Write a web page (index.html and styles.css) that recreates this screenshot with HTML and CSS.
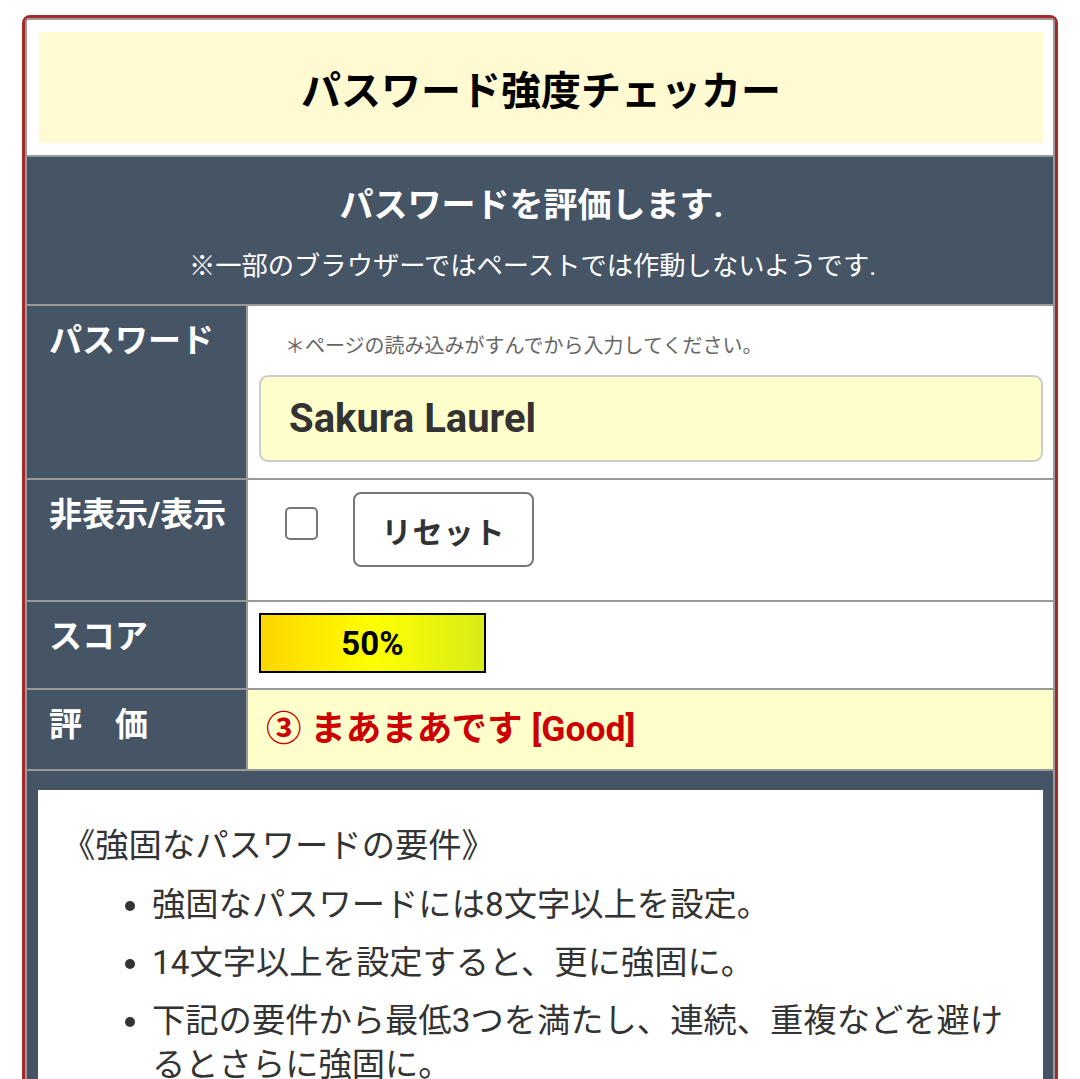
FILE: index.html
```html
<!DOCTYPE html>
<html lang="ja">
<head>
<meta charset="utf-8">
<title>パスワード強度チェッカー</title>
<link rel="stylesheet" href="styles.css">
</head>
<body>
<div class="frame">
  <div class="inner">
    <div class="title-wrap">
      <h1 class="title">パスワード強度チェッカー</h1>
    </div>
    <div class="head">
      <p class="head-main">パスワードを評価します.</p>
      <p class="head-sub">※一部のブラウザーではペーストでは作動しないようです.</p>
    </div>
    <div class="row row-pass">
      <div class="label">パスワード</div>
      <div class="value">
        <p class="note">＊ページの読み込みがすんでから入力してください。</p>
        <input class="pass-input" type="text" value="Sakura Laurel">
      </div>
    </div>
    <div class="row row-toggle">
      <div class="label">非表示/表示</div>
      <div class="value toggle-cell">
        <input class="check" type="checkbox">
        <button class="reset" type="button">リセット</button>
      </div>
    </div>
    <div class="row row-score">
      <div class="label">スコア</div>
      <div class="value score-cell">
        <div class="bar">50%</div>
      </div>
    </div>
    <div class="row row-eval">
      <div class="label">評　価</div>
      <div class="value eval-cell">③ まあまあです [Good]</div>
    </div>
    <div class="info-wrap">
      <div class="info">
        <p class="info-head">《強固なパスワードの要件》</p>
        <ul class="info-list">
          <li>強固なパスワードには8文字以上を設定。</li>
          <li>14文字以上を設定すると、更に強固に。</li>
          <li>下記の要件から最低3つを満たし、連続、重複などを避けるとさらに強固に。</li>
        </ul>
      </div>
    </div>
  </div>
</div>
</body>
</html>
```
FILE: styles.css
```css
* { box-sizing: border-box; }

html, body { background: #fff; }

body {
  margin: 15px 22px 0 22px;
  font-family: Roboto, "Noto Sans CJK JP", sans-serif;
  color: #333;
}

p { margin: 0; }

.frame {
  border: 3px solid #a52a2a;
  border-radius: 8px;
}

.inner {
  border: 2px solid #999;
  border-radius: 4px 4px 0 0;
  overflow: hidden;
}

.title-wrap {
  background: #fff;
  padding: 12px 10px 12px 12px;
}

.title {
  margin: 0;
  height: 111px;
  background: #fffad2;
  display: flex;
  align-items: center;
  justify-content: center;
  font-size: 40px;
  font-weight: bold;
  color: #000;
}

.head {
  border-top: 2px solid #999;
  background: #465566;
  color: #fff;
  text-align: center;
  padding: 24px 0 19px;
}

.head-main {
  font-size: 34px;
  font-weight: bold;
  line-height: 48px;
  padding-right: 17px;
}

.head-sub {
  margin-top: 18px;
  font-size: 26.3px;
  line-height: 38px;
  padding-right: 15px;
}

.row {
  display: grid;
  grid-template-columns: 221px 1fr;
  border-top: 2px solid #999;
}

.label {
  background: #465566;
  color: #fff;
  font-size: 33px;
  font-weight: bold;
  line-height: 48px;
  padding: 11px 0 0 22px;
  border-right: 2px solid #999;
  white-space: nowrap;
}

.value {
  background: #fff;
  padding: 11px 10px 16px 11px;
}

.note {
  margin-left: 26px;
  font-size: 20px;
  line-height: 58px;
  color: #666;
}

.pass-input {
  display: block;
  width: 100%;
  height: 87px;
  margin: 0;
  border: 2px solid #ccc;
  border-radius: 9px;
  background: #ffffcc;
  padding: 0 0 0 28px;
  font-family: Roboto, "Noto Sans CJK JP", sans-serif;
  font-size: 40px;
  font-weight: bold;
  color: #333;
  outline: none;
}

.toggle-cell {
  display: flex;
  align-items: flex-start;
  padding: 12px 10px 33px 11px;
}

.check {
  appearance: none;
  -webkit-appearance: none;
  width: 33px;
  height: 33px;
  margin: 15px 0 0 26px;
  border: 2px solid #777;
  border-radius: 5px;
  background: #fff;
}

.reset {
  margin: 0 0 0 35px;
  width: 181px;
  height: 75px;
  border: 2px solid #777;
  border-radius: 8px;
  background: #fff;
  font-family: Roboto, "Noto Sans CJK JP", sans-serif;
  font-size: 30px;
  font-weight: bold;
  letter-spacing: 1px;
  color: #333;
  padding: 0;
}

.score-cell {
  padding: 11px 10px 15px 11px;
}

.bar {
  width: 227px;
  height: 60px;
  border: 2px solid #000;
  background: linear-gradient(to right, #ffd600 0%, #ffff00 50%, #d8ec18 100%);
  display: flex;
  align-items: center;
  justify-content: center;
  font-size: 33px;
  font-weight: bold;
  color: #000;
}

.eval-cell {
  background: #ffffcc;
  color: #cc0000;
  font-size: 35.5px;
  font-weight: bold;
  line-height: 52px;
  padding: 13px 10px 14px 18px;
}

.info-wrap {
  border-top: 2px solid #999;
  background: #465566;
  padding: 19px 10px 0 11px;
}

.info {
  background: #fff;
  padding: 34px 30px 40px 24px;
  font-size: 33.3px;
  line-height: 44px;
  color: #333;
}

.info-head {
  margin-bottom: 15px;
}

.info-list {
  margin: 0;
  padding-left: 90px;
}

.info-list li {
  margin-bottom: 14px;
}
```
